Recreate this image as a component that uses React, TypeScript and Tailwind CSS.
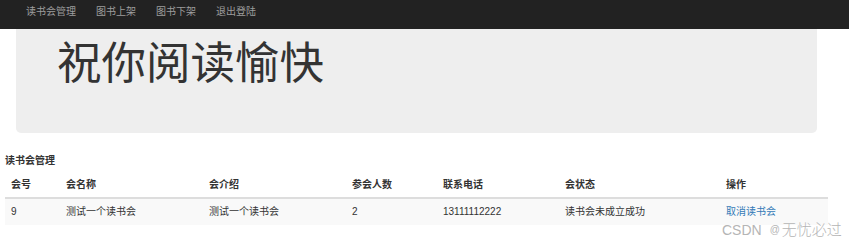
import React from "react";

const font = { fontFamily: '"Liberation Sans", "Noto Sans CJK SC", sans-serif' };

const cols = [
  { label: "会号", w: "w-[55px]" },
  { label: "会名称", w: "w-[143px]" },
  { label: "会介绍", w: "w-[143px]" },
  { label: "参会人数", w: "w-[91px]" },
  { label: "联系电话", w: "w-[122px]" },
  { label: "会状态", w: "w-[161px]" },
  { label: "操作", w: "w-[108px]" },
];

export default function App() {
  const row = ["9", "测试一个读书会", "测试一个读书会", "2", "13111112222", "读书会未成立成功"];
  return (
    <div className="relative w-[849px] h-[248px] bg-white text-[#333] overflow-hidden" style={font}>
      <nav className="h-[29px] bg-[#222] flex items-center pl-[16px]">
        {["读书会管理", "图书上架", "图书下架", "退出登陆"].map((t) => (
          <span key={t} className="px-[10px] text-[10px] leading-[10px] text-[#9d9d9d] -mt-[5px]">
            {t}
          </span>
        ))}
      </nav>
      <div className="mx-[16px] w-[801px] h-[104px] bg-[#eee] rounded-b-[5px] pl-[41px] pt-[9px]">
        <h1 className="text-[44.5px] leading-[52px] font-normal text-[#333]">祝你阅读愉快</h1>
      </div>
      <div className="pl-[5px] pt-[23px]">
        <div className="text-[10px] leading-[10px] font-bold text-[#333]">读书会管理</div>
        <table className="mt-[4px] w-[823px] table-fixed border-collapse text-[10px] leading-[10px]">
          <thead>
            <tr className="border-b-2 border-[#ddd]">
              {cols.map((c) => (
                <th key={c.label} className={`${c.w} text-left font-bold px-[6px] pt-[10px] pb-[7px]`}>
                  {c.label}
                </th>
              ))}
            </tr>
          </thead>
          <tbody>
            <tr className="bg-[#f9f9f9]">
              {row.map((v, i) => (
                <td key={i} className="px-[6px] py-[8px] text-[#333]">
                  {v}
                </td>
              ))}
              <td className="px-[6px] py-[8px] text-[#337ab7]">取消读书会</td>
            </tr>
          </tbody>
        </table>
      </div>
      <div className="absolute left-[722px] top-[222px] flex items-center text-[#b5b5b5] text-[15px] leading-[16px]">
        <span style={{ fontFamily: '"Liberation Sans", sans-serif' }} className="text-[14px]">CSDN</span>
        <span className="ml-[8px] text-[10px]">@</span>
        <span className="ml-[2px] font-light">无忧必过</span>
      </div>
    </div>
  );
}
